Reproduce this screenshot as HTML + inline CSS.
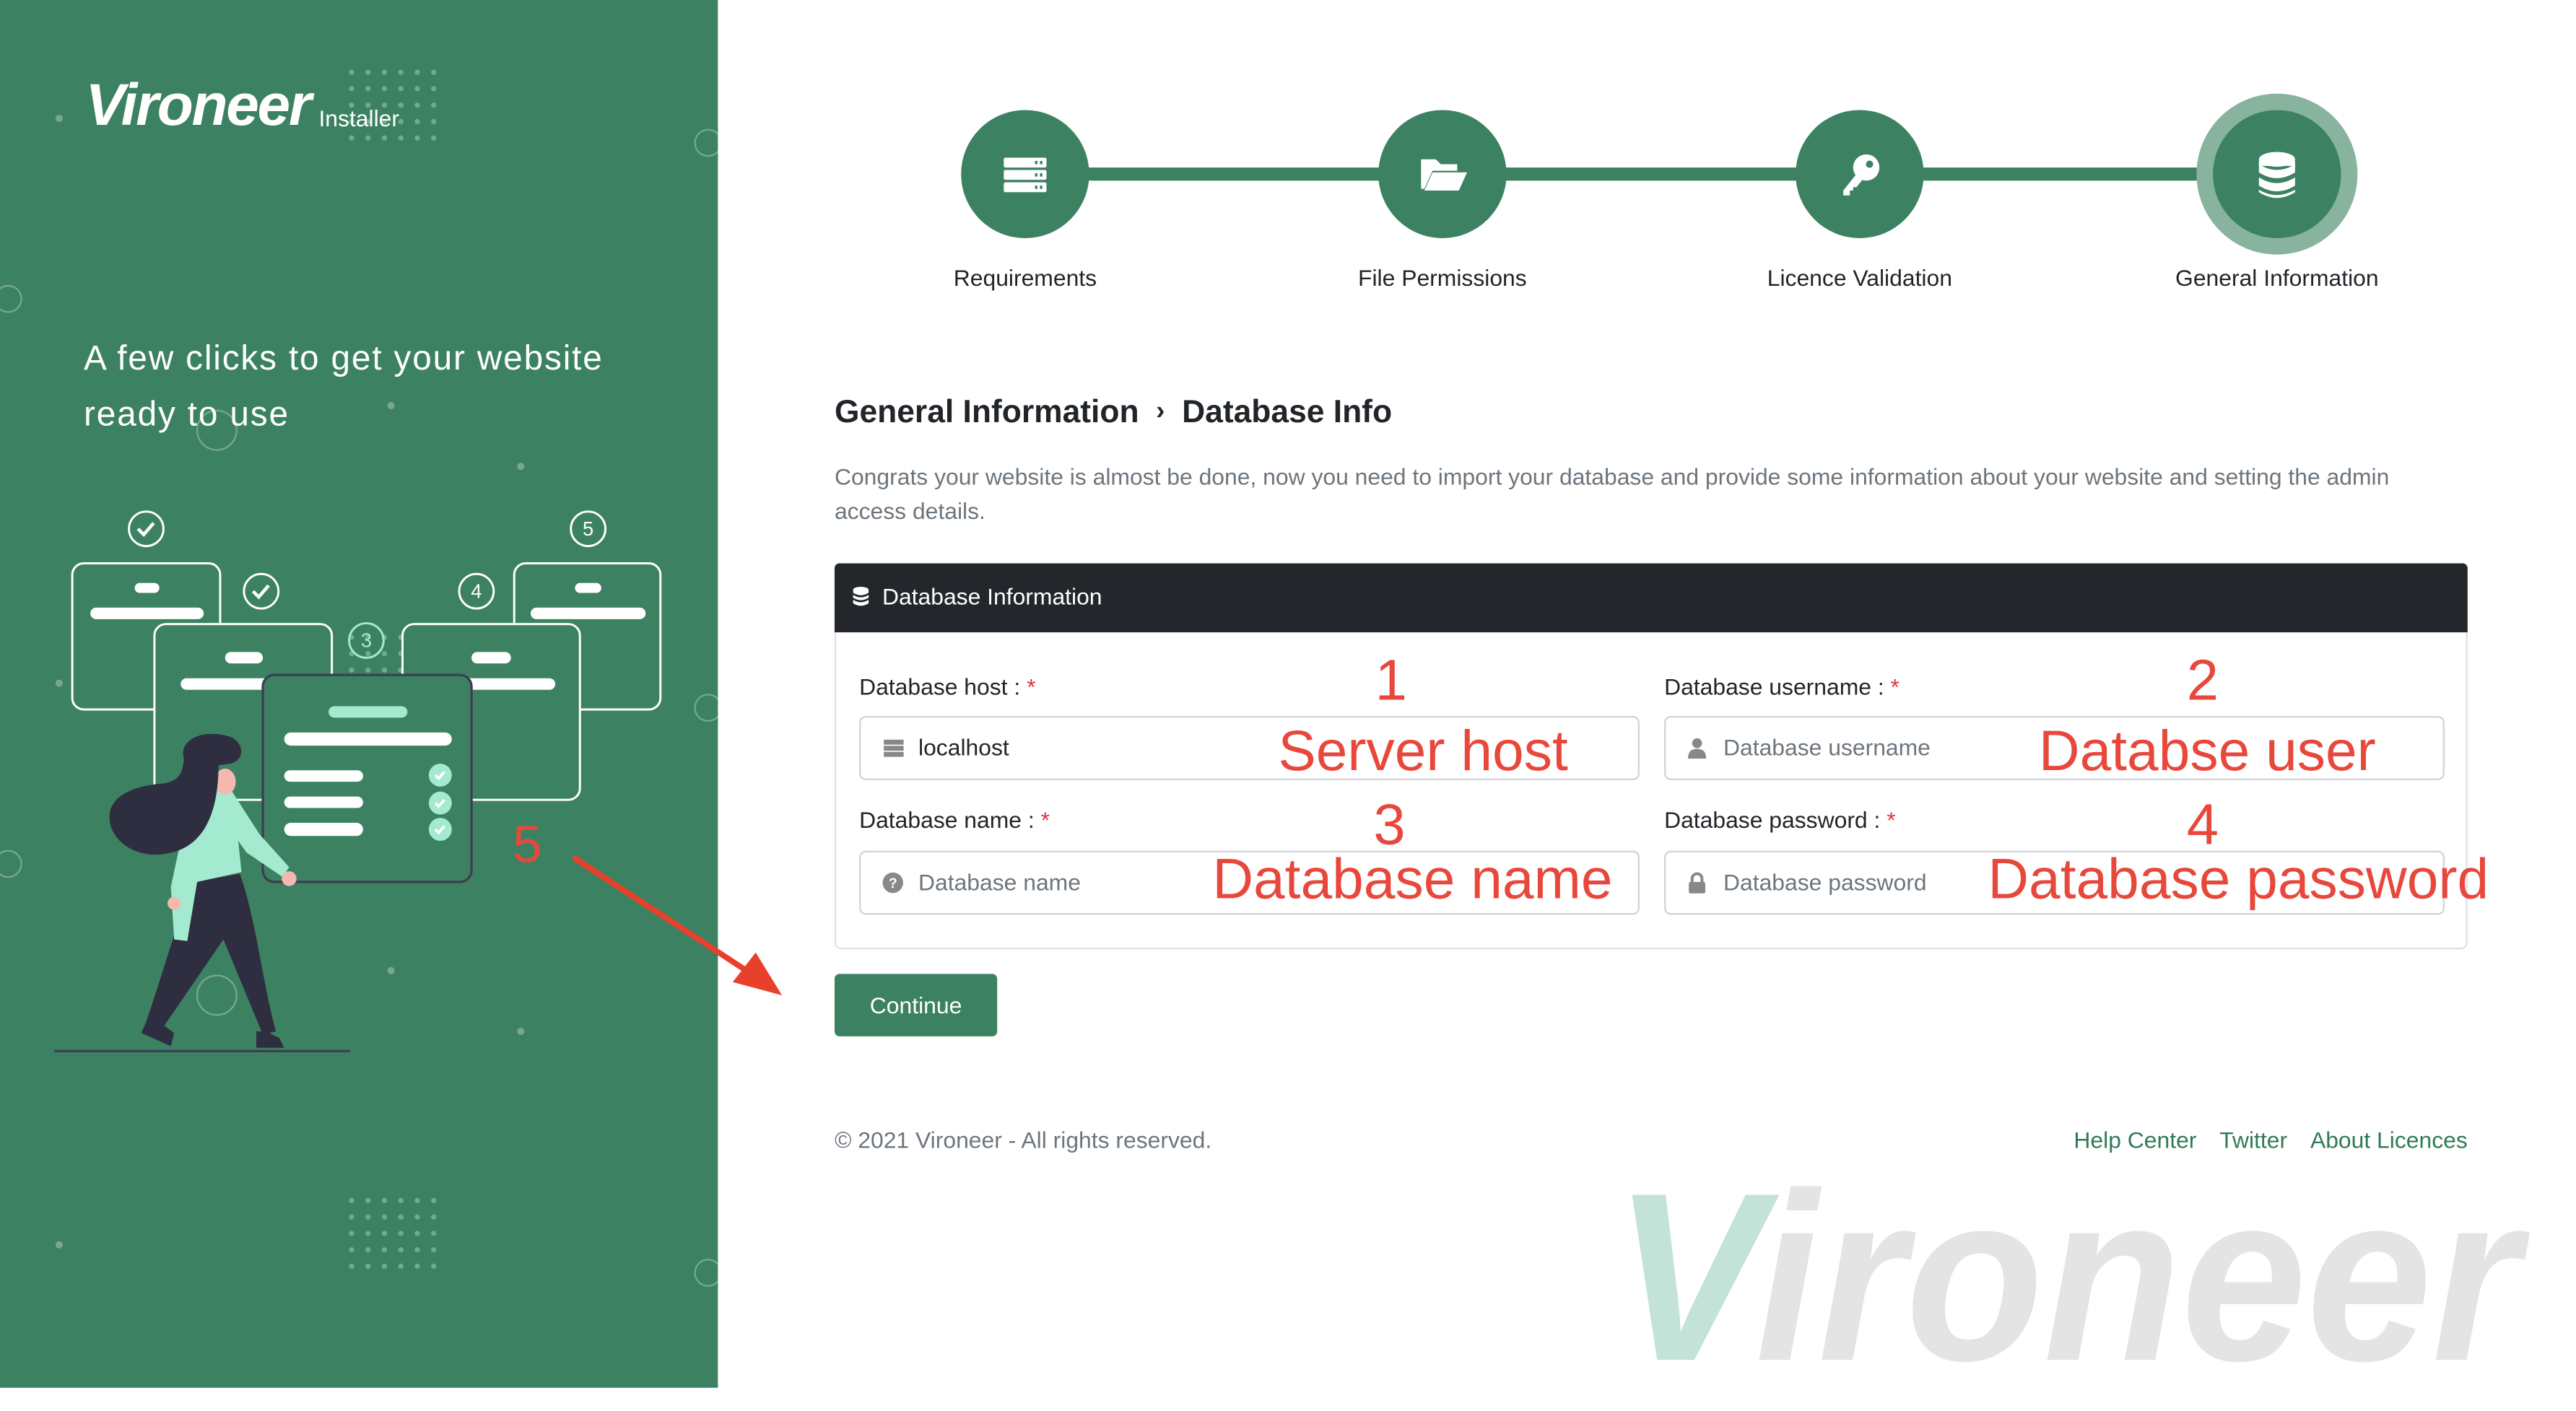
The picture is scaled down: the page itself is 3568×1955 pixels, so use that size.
<!DOCTYPE html>
<html><head><meta charset="utf-8">
<style>
html,body{margin:0;padding:0;width:3568px;height:1921px;overflow:hidden;background:#fff;}
#w{position:absolute;left:0;top:0;width:1568px;height:845px;transform:scale(2.2755);transform-origin:0 0;font-family:"Liberation Sans",Arial,sans-serif;color:#212529;}
.a{position:absolute;white-space:nowrap;}
.lbl{font-size:14px;color:#212529;}
.lbl b{color:#dc3545;font-weight:normal;}
.inp{position:absolute;height:37px;border:1px solid #ced4da;border-radius:4px;background:#fff;}
.inp span{position:absolute;left:35px;top:10px;font-size:14px;color:#6c757d;}
.inp svg{position:absolute;left:13px;top:12px;}
.red{color:#e8483c;position:absolute;white-space:nowrap;line-height:1;}
.st{position:absolute;width:78px;height:78px;border-radius:50%;background:#3c8262;}
.st svg{position:absolute;left:25px;top:25px;}
.sl{position:absolute;top:161px;font-size:14px;width:200px;text-align:center;}
</style></head><body><div id="w">

<div class="a" style="left:0;top:0;width:437px;height:845px;background:#3c8262;"></div>
<svg class="a" style="left:0;top:0" width="437" height="845" viewBox="0 0 437 845">
 <g fill="rgba(255,255,255,0.3)">
  <g id="grid"><circle cx="214" cy="44" r="1.6"/><circle cx="224" cy="44" r="1.6"/><circle cx="234" cy="44" r="1.6"/><circle cx="244" cy="44" r="1.6"/><circle cx="254" cy="44" r="1.6"/><circle cx="264" cy="44" r="1.6"/></g>
  <use href="#grid" y="10"/><use href="#grid" y="20"/><use href="#grid" y="30"/><use href="#grid" y="40"/>
  <use href="#grid" y="687"/><use href="#grid" y="697"/><use href="#grid" y="707"/><use href="#grid" y="717"/><use href="#grid" y="727"/>
  <use href="#grid" y="344"/><use href="#grid" y="354"/><use href="#grid" y="364"/><use href="#grid" y="374"/><use href="#grid" y="384"/>
  <circle cx="36" cy="72" r="2.2"/><circle cx="238" cy="247" r="2.2"/><circle cx="317" cy="284" r="2.2"/>
  <circle cx="36" cy="416" r="2.2"/><circle cx="238" cy="591" r="2.2"/><circle cx="317" cy="628" r="2.2"/><circle cx="36" cy="758" r="2.2"/>
 </g>
 <g fill="none" stroke="rgba(255,255,255,0.3)" stroke-width="1">
  <circle cx="431" cy="87" r="8"/><circle cx="5" cy="182" r="8"/><circle cx="132" cy="262" r="12"/>
  <circle cx="431" cy="431" r="8"/><circle cx="5" cy="526" r="8"/><circle cx="132" cy="606" r="12"/><circle cx="431" cy="775" r="8"/>
 </g>
 <g fill="#3c8262" stroke="#fff" stroke-width="1.3">
  <rect x="44" y="343" width="90" height="89" rx="7"/>
  <rect x="313" y="343" width="89" height="89" rx="7"/>
  <rect x="94" y="380" width="108" height="107" rx="7"/>
  <rect x="245" y="380" width="108" height="107" rx="7"/>
 </g>
 <g fill="#fff">
  <rect x="82" y="355" width="15" height="6" rx="3"/><rect x="55" y="370" width="69" height="7" rx="3.5"/>
  <rect x="350" y="355" width="16" height="6" rx="3"/><rect x="323" y="370" width="70" height="7" rx="3.5"/>
  <rect x="137" y="397" width="23" height="7" rx="3.5"/><rect x="110" y="413" width="60" height="7" rx="3.5"/>
  <rect x="287" y="397" width="24" height="7" rx="3.5"/><rect x="280" y="413" width="58" height="7" rx="3.5"/>
 </g>
 <g fill="none" stroke="#fff" stroke-width="1.3">
  <circle cx="89" cy="322" r="10.5"/><circle cx="358" cy="322" r="10.5"/><circle cx="159" cy="360" r="10.5"/><circle cx="290" cy="360" r="10.5"/>
  <path d="M84,322 l3.5,3.5 l6,-7" stroke-width="2"/><path d="M154,360 l3.5,3.5 l6,-7" stroke-width="2"/>
 </g>
 <circle cx="223" cy="390" r="10.5" fill="none" stroke="#a3ead0" stroke-width="1.3"/>
 <g font-family="Liberation Sans,sans-serif" font-size="12" fill="#fff" text-anchor="middle">
  <text x="358" y="326">5</text><text x="290" y="364">4</text><text x="223" y="394" fill="#a3ead0">3</text>
 </g>
 <rect x="160" y="411" width="127" height="126" rx="7" fill="#3c8262" stroke="#3f3d56" stroke-width="1.5"/>
 <rect x="200" y="430" width="48" height="7" rx="3.5" fill="#a3ead0"/>
 <rect x="173" y="446" width="102" height="8" rx="4" fill="#fff"/>
 <rect x="173" y="469" width="48" height="7" rx="3.5" fill="#fff"/>
 <rect x="173" y="485" width="48" height="7" rx="3.5" fill="#fff"/>
 <rect x="173" y="501" width="48" height="8" rx="4" fill="#fff"/>
 <g fill="#a3ead0"><circle cx="268" cy="472" r="7"/><circle cx="268" cy="489" r="7"/><circle cx="268" cy="505" r="7"/></g>
 <g fill="none" stroke="#fff" stroke-width="1.6"><path d="M265,472 l2,2 l3.5,-4"/><path d="M265,489 l2,2 l3.5,-4"/><path d="M265,505 l2,2 l3.5,-4"/></g>
 <line x1="33" y1="640" x2="213" y2="640" stroke="#3f3d56" stroke-width="1.5"/>
 <path d="M118,537 L146,532 C156,560 160,600 168,628 L160,630 L136,572 L99,626 L89,622 C100,590 108,560 118,537 Z" fill="#2f2e41"/>
 <path d="M156,628 l6,0 l8,4 l3,6 l-17,0 Z M90,620 l8,3 l8,6 l-2,8 l-18,-8 Z" fill="#2f2e41"/>
 <path d="M116,484 L140,480 L158,508 L176,528 L172,534 L150,519 L145,512 L147,531 L120,537 L114,573 L106,572 L104,540 Z" fill="#a3ead0"/>
 <circle cx="176" cy="535" r="4.5" fill="#f4b8b0"/><circle cx="106" cy="550" r="4" fill="#f4b8b0"/>
 <ellipse cx="137" cy="476" rx="6.5" ry="8" fill="#f4b8b0"/>
 <path d="M112,462 C108,450 125,443 141,449 C149,453 149,463 140,465 L133,466 C133,495 124,517 100,520 C80,523 64,509 67,494 C70,482 86,478 100,477 C110,475 111,470 112,462 Z" fill="#2f2e41"/>
</svg>
<svg class="a" style="left:0;top:0" width="600" height="700" viewBox="0 0 600 700">
 <line x1="349" y1="522" x2="462" y2="596" stroke="#e8402a" stroke-width="3.5"/>
 <path d="M476,606 L446,598 L460,580 Z" fill="#e8402a"/>
</svg>
<div class="a" style="left:52px;top:44px;font-size:36px;font-weight:bold;font-style:italic;color:#fff;letter-spacing:-1px;line-height:1.1;">Vironeer</div>
<div class="a" style="left:194px;top:64px;font-size:14px;color:#fff;">Installer</div>
<div class="a" style="left:51px;top:202px;font-size:21px;line-height:34px;color:#fff;letter-spacing:0.8px;">A few clicks to get your website<br>ready to use</div>
<div class="red" style="left:312px;top:498px;font-size:32px;">5</div>

<div class="a" style="left:624px;top:102px;width:762px;height:8px;background:#3c8262;"></div>
<div class="a" style="left:1337px;top:57px;width:98px;height:98px;border-radius:50%;background:#88b39f;"></div>
<div class="st" style="left:585px;top:67px;"><svg width="28" height="28" viewBox="0 0 28 28"><g fill="#fff"><rect x="1" y="4" width="26" height="6" rx="1"/><rect x="1" y="11.5" width="26" height="6" rx="1"/><rect x="1" y="19" width="26" height="6" rx="1"/></g><g fill="#3c8262"><rect x="20" y="6" width="1.5" height="2"/><rect x="23" y="6" width="1.5" height="2"/><rect x="20" y="13.5" width="1.5" height="2"/><rect x="23" y="13.5" width="1.5" height="2"/><rect x="20" y="21" width="1.5" height="2"/><rect x="23" y="21" width="1.5" height="2"/></g></svg></div>
<div class="st" style="left:839px;top:67px;"><svg width="30" height="28" viewBox="0 0 30 28"><path d="M1,5 h9 l3,3 h10 v4 H8 L3,23 H1 Z" fill="#fff"/><path d="M8,13 H29 L24,24 H3 Z" fill="#fff"/></svg></div>
<div class="st" style="left:1093px;top:67px;"><svg width="28" height="28" viewBox="0 0 28 28"><circle cx="18" cy="10" r="8" fill="#fff"/><circle cx="20" cy="8" r="2.2" fill="#3c8262"/><path d="M12,14 L4,24 L4,27 L8,27 L8,24 L10,24 L10,22 L12,22 L16,17 Z" fill="#fff"/></svg></div>
<div class="st" style="left:1347px;top:67px;"><svg width="28" height="30" viewBox="0 0 28 30"><g fill="#fff"><ellipse cx="14" cy="5" rx="11" ry="4.5"/><path d="M3,8 Q14,15 25,8 V13 Q14,20 3,13 Z"/><path d="M3,16 Q14,23 25,16 V21 Q14,28 3,21 Z"/><path d="M3,6 V9 H25 V6 Z"/><path d="M3,23.5 Q14,30 25,23.5 V25 Q14,32 3,25 Z"/></g></svg></div>
<div class="sl" style="left:524px;">Requirements</div>
<div class="sl" style="left:778px;">File Permissions</div>
<div class="sl" style="left:1032px;">Licence Validation</div>
<div class="sl" style="left:1286px;">General Information</div>

<div class="a" style="left:508px;top:240px;font-size:19.5px;font-weight:bold;">General Information <span style="font-size:16px;margin:0 5px;position:relative;top:-2px;">&#x203A;</span> Database Info</div>
<div class="a" style="left:508px;top:280px;width:990px;font-size:14px;line-height:21px;color:#6c757d;white-space:normal;">Congrats your website is almost be done, now you need to import your database and provide some information about your website and setting the admin access details.</div>

<div class="a" style="left:508px;top:343px;width:994px;height:235px;border:1px solid #dee2e6;border-radius:4px;box-sizing:border-box;"></div>
<div class="a" style="left:508px;top:343px;width:994px;height:42px;background:#23272b;border-radius:3px 3px 0 0;"></div>
<svg class="a" style="left:518px;top:356px" width="12" height="15" viewBox="0 0 28 30"><g fill="#fff"><ellipse cx="14" cy="5" rx="11" ry="4.5"/><path d="M3,6 V9 Q14,16 25,9 V6 Z"/><path d="M3,12 Q14,19 25,12 V16 Q14,23 3,16 Z"/><path d="M3,19 Q14,26 25,19 V24 Q14,31 3,24 Z"/></g></svg>
<div class="a" style="left:537px;top:355px;font-size:14px;color:#fff;">Database Information</div>

<div class="a lbl" style="left:523px;top:410px;">Database host : <b>*</b></div>
<div class="a lbl" style="left:1013px;top:410px;">Database username : <b>*</b></div>
<div class="a lbl" style="left:523px;top:491px;">Database name : <b>*</b></div>
<div class="a lbl" style="left:1013px;top:491px;">Database password : <b>*</b></div>

<div class="inp" style="left:523px;top:436px;width:473px;"><svg width="14" height="13" viewBox="0 0 28 28"><g fill="#888"><rect x="1" y="3" width="26" height="6.5"/><rect x="1" y="11" width="26" height="6.5"/><rect x="1" y="19" width="26" height="6.5"/></g></svg><span style="color:#212529">localhost</span></div>
<div class="inp" style="left:1013px;top:436px;width:473px;"><svg width="12" height="13" viewBox="0 0 24 26"><circle cx="12" cy="7" r="6" fill="#888"/><path d="M1,26 C1,17 5,14 12,14 C19,14 23,17 23,26 Z" fill="#888"/></svg><span>Database username</span></div>
<div class="inp" style="left:523px;top:518px;width:473px;"><svg width="13" height="13" viewBox="0 0 26 26"><circle cx="13" cy="13" r="12.5" fill="#888"/><text x="13" y="19" font-size="17" font-weight="bold" text-anchor="middle" fill="#fff" font-family="Liberation Sans">?</text></svg><span>Database name</span></div>
<div class="inp" style="left:1013px;top:518px;width:473px;"><svg width="12" height="13" viewBox="0 0 24 26"><path d="M6,12 V8 a6,6 0 0 1 12,0 V12" fill="none" stroke="#888" stroke-width="3.5"/><rect x="2" y="12" width="20" height="14" rx="2" fill="#888"/></svg><span>Database password</span></div>

<div class="red" style="left:837px;top:397px;font-size:35px;">1</div>
<div class="red" style="left:1331px;top:397px;font-size:35px;">2</div>
<div class="red" style="left:836px;top:485px;font-size:35px;">3</div>
<div class="red" style="left:1331px;top:485px;font-size:35px;">4</div>
<div class="red" style="left:778px;top:441px;font-size:34.5px;">Server host</div>
<div class="red" style="left:1241px;top:441px;font-size:34.5px;">Databse user</div>
<div class="red" style="left:738px;top:519px;font-size:34.5px;">Database name</div>
<div class="red" style="left:1210px;top:519px;font-size:34.5px;">Database password</div>

<div class="a" style="left:508px;top:593px;width:99px;height:38px;background:#3c8262;border-radius:3px;color:#fff;font-size:14px;text-align:center;line-height:38px;">Continue</div>

<div class="a" style="left:508px;top:686px;font-size:14px;color:#6c757d;">© 2021 Vironeer - All rights reserved.</div>
<div class="a" style="right:66px;top:686px;font-size:14px;color:#2f7a57;">Help Center<span style="margin-left:14px">Twitter</span><span style="margin-left:14px">About Licences</span></div>

<div class="a" style="left:982px;top:705px;font-size:146px;font-weight:bold;font-style:italic;letter-spacing:0;transform:scaleX(0.94);transform-origin:0 0;line-height:1;"><span style="color:#c3e2d8">V</span><span style="color:#e4e4e4">ironeer</span></div>

</div></body></html>
